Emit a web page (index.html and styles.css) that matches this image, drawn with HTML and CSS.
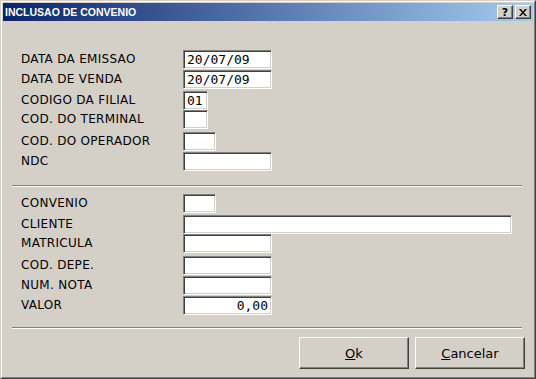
FILE: index.html
```html
<!DOCTYPE html>
<html lang="pt">
<head>
    <meta charset="UTF-8">
    <title>INCLUSAO DE CONVENIO</title>
    <link rel="stylesheet" href="styles.css">
</head>
<body>
    <div class="window">
        <div class="frame">
            <div class="titlebar">
                <span class="title">INCLUSAO DE CONVENIO</span>
                <div class="title-btns">
                    <span class="tbtn help">?</span>
                    <span class="tbtn close">
                        <svg width="8" height="7" viewBox="0 0 8 7">
                            <path d="M0 0h2l2 2.5 2-2.5h2l-3 3.5 3 3.5h-2l-2-2.5-2 2.5h-2l3-3.5z" fill="#000"/>
                        </svg>
                    </span>
                </div>
            </div>

            <div class="body">
                <div class="form group1">
                    <label>DATA DA EMISSAO</label><input class="w89" type="text" value="20/07/09">
                    <label>DATA DE VENDA</label><input class="w89" type="text" value="20/07/09">
                    <label>CODIGO DA FILIAL</label><input class="w25" type="text" value="01">
                    <label>COD. DO TERMINAL</label><input class="w25" type="text" value="">
                    <label>COD. DO OPERADOR</label><input class="w33" type="text" value="">
                    <label>NDC</label><input class="w89" type="text" value="">
                </div>

                <div class="sep sep1"></div>

                <div class="form group2">
                    <label>CONVENIO</label><input class="w33" type="text" value="">
                    <label>CLIENTE</label><input class="w329" type="text" value="">
                    <label>MATRICULA</label><input class="w89" type="text" value="">
                    <label>COD. DEPE.</label><input class="w89" type="text" value="">
                    <label>NUM. NOTA</label><input class="w89" type="text" value="">
                    <label>VALOR</label><input class="w89 num" type="text" value="0,00">
                </div>

                <div class="sep sep2"></div>

                <div class="buttons">
                    <button><u>O</u>k</button>
                    <button><u>C</u>ancelar</button>
                </div>
            </div>
        </div>
    </div>
</body>
</html>
```

FILE: styles.css
```css
body { margin: 0; background: #d4d0c8; }

.window {
    width: 536px;
    height: 379px;
    box-sizing: border-box;
    border: 1px solid;
    border-color: #d4d0c8 #404040 #404040 #d4d0c8;
    background: #d4d0c8;
}
.frame {
    height: 100%;
    box-sizing: border-box;
    border: 1px solid;
    border-color: #fff #808080 #808080 #fff;
    padding: 1px;
}

.titlebar {
    height: 18px;
    display: flex;
    align-items: center;
    justify-content: space-between;
    padding: 0 2px 0 2px;
    background: linear-gradient(to right, #0a246a, #a6caf0);
}
.title {
    color: #fff;
    font-family: "Liberation Sans", Arial, sans-serif;
    font-weight: bold;
    font-size: 10.5px;
}
.title-btns { display: flex; gap: 2px; }
.tbtn {
    width: 16px;
    height: 14px;
    box-sizing: border-box;
    display: flex;
    align-items: center;
    justify-content: center;
    background: #d4d0c8;
    border: 1px solid;
    border-color: #fff #404040 #404040 #fff;
    box-shadow: inset -1px -1px 0 #808080;
    font-family: "DejaVu Sans", sans-serif;
    font-weight: bold;
    font-size: 11px;
    line-height: 1;
    color: #000;
}

.body { padding: 29px 0 0 0; }

.form {
    display: grid;
    grid-template-columns: 162px auto;
    padding-left: 18px;
    align-items: start;
    justify-items: start;
}
.group1 { grid-template-rows: 20px 21px 19px 22px 20px 20px; }
.group2 { grid-template-rows: 21px 19px 22px 20px 20px 20px; }

label {
    font-family: "DejaVu Sans", sans-serif;
    font-size: 12px;
    letter-spacing: 0.3px;
    line-height: 19px;
    color: #000;
}

input[type="text"] {
    height: 19px;
    box-sizing: border-box;
    margin: 0;
    padding: 0 3px;
    border: 1px solid;
    border-color: #808080 #fff #fff #808080;
    box-shadow: inset 1px 1px 0 #404040, inset -1px -1px 0 #d4d0c8;
    background: #fff;
    font-family: "DejaVu Sans Mono", monospace;
    font-size: 13px;
    color: #000;
    outline: none;
}
.w25 { width: 25px; }
.w33 { width: 33px; }
.w89 { width: 89px; }
.w329 { width: 329px; }
.num { text-align: right; padding-right: 4px; }

.sep {
    margin-left: 9px;
    width: 510px;
    height: 0;
    border-top: 1px solid #808080;
    border-bottom: 1px solid #fff;
}
.sep1 { margin-top: 13px; margin-bottom: 7px; }
.sep2 { margin-top: 11px; }

.buttons {
    display: flex;
    justify-content: flex-end;
    gap: 6px;
    padding: 8px 8px 0 0;
}
button {
    width: 110px;
    height: 32px;
    box-sizing: border-box;
    background: #d4d0c8;
    border: 1px solid;
    border-color: #fff #404040 #404040 #fff;
    box-shadow: inset -1px -1px 0 #808080;
    font-family: "DejaVu Sans", sans-serif;
    font-size: 13px;
    color: #000;
    padding: 0;
}
```
